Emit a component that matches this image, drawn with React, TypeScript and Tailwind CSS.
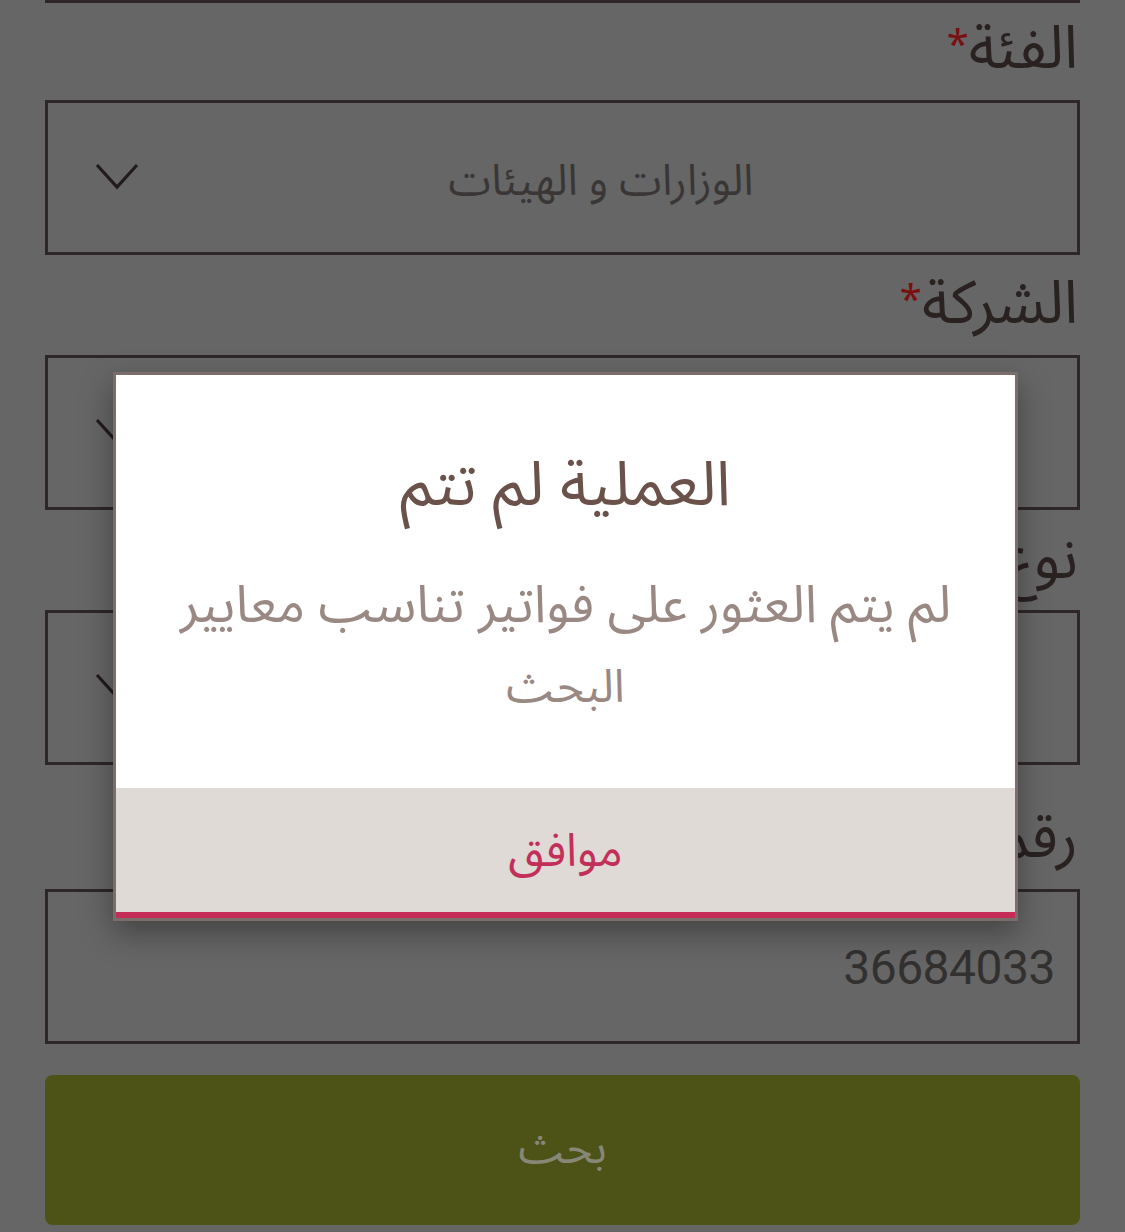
import React from "react";

const AR = "font-['Noto_Sans_Arabic','DejaVu_Sans_Condensed','DejaVu_Sans',sans-serif]";

function Chevron() {
  return (
    <svg width="44" height="28" viewBox="0 0 44 28" className="shrink-0">
      <polyline points="2,2 22,24 42,2" fill="none" stroke="#231b1b" strokeWidth="3.2" />
    </svg>
  );
}

function Label({ text, h = 100 }: { text: string; h?: number }) {
  return (
    <div className={`flex items-end justify-start ${AR}`} style={{ height: h }} dir="rtl">
      <span className="text-[60px] leading-[1.3] text-[#2a2121] pb-[12px] pr-[2px] whitespace-nowrap">
        {text}
        <span className="text-[40px] text-[#7a0f0f] align-top relative top-[10px]">*</span>
      </span>
    </div>
  );
}

function SelectBox({ value }: { value?: string }) {
  return (
    <div className="h-[155px] border-[3px] border-[#2f2727] flex items-center">
      <div className="pl-[47px] pb-[2px]">
        <Chevron />
      </div>
      <div className={`flex-1 flex items-center justify-center pr-[14px] pt-[10px] ${AR}`} dir="rtl">
        <span className="text-[43px] text-[#3a3636] whitespace-nowrap">{value}</span>
      </div>
    </div>
  );
}

export default function App() {
  return (
    <div className="w-[1125px] h-[1232px] bg-[#666666] relative overflow-hidden">
      <div className="px-[45px]">
        <div className="border-t-[3px] border-[#2f2727]" />
        <Label text="الفئة" h={97} />
        <SelectBox value="الوزارات و الهيئات" />
        <Label text="الشركة" />
        <SelectBox value="" />
        <Label text="نوع الخدمة" />
        <SelectBox value="" />
        <Label text="رقم الهاتف" h={124} />
        <div className="h-[155px] border-[3px] border-[#2f2727] flex items-center justify-end pr-[22px]">
          <span className="font-['Roboto',sans-serif] text-[48px] text-[#333030] tracking-[-0.5px] pt-[2px]">36684033</span>
        </div>
        <div className="mt-[31px] h-[150px] rounded-[8px] bg-[#4d5216] flex items-center justify-center">
          <span className={`${AR} text-[44px] text-[#878778] pb-[2px]`}>بحث</span>
        </div>
      </div>

      <div className="absolute left-[113px] top-[372px] w-[905px] h-[549px] border-[3px] border-[#7b6e6a] bg-white flex flex-col shadow-[0_12px_30px_rgba(0,0,0,0.35)]">
        <div className={`flex-1 flex flex-col items-center ${AR}`} dir="rtl">
          <div className="mt-[66px] text-[62px] leading-[90px] text-[#6a5149] whitespace-nowrap">العملية لم تتم</div>
          <div className="mt-[34px] text-[52px] leading-[82px] text-[#9a8883] text-center whitespace-nowrap">
            <div>لم يتم العثور على فواتير تناسب معايير</div>
            <div className="text-[46px]">البحث</div>
          </div>
        </div>
        <div className="h-[124px] bg-[#dfdad5] flex items-center justify-center">
          <span className={`${AR} text-[46px] text-[#c2305a] pt-[2px]`}>موافق</span>
        </div>
        <div className="h-[6px] bg-[#c52d58]" />
      </div>
    </div>
  );
}
